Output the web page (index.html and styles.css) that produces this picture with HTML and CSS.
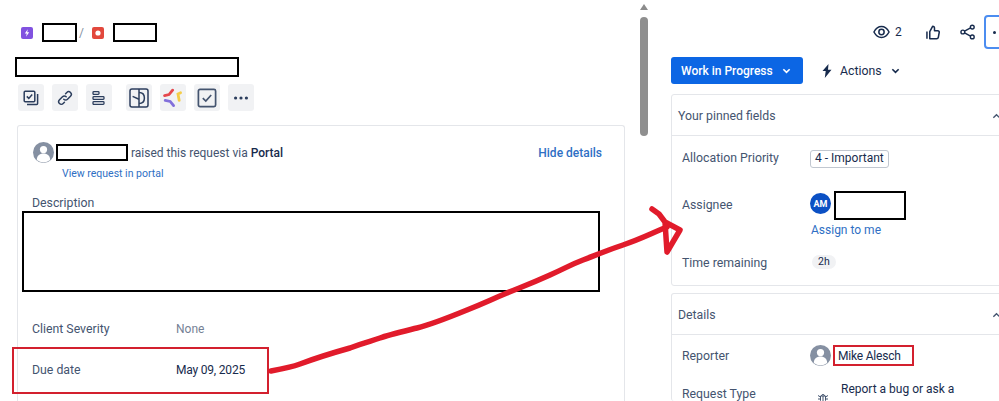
FILE: index.html
```html
<!DOCTYPE html>
<html>
    <head>
        <title>Request details</title>
        <link rel="stylesheet" href="styles.css">
    </head>
    <body>
        <div class="main">
            <div class="breadcrumb">
                <svg class="crumb-icon" viewBox="0 0 12 12"><rect width="12" height="12" rx="2" fill="#8152e0"/><path d="M6.800 2.200 3.800 6.600h2L5 9.800l3.200-4.500H6.200z" fill="#fff"/></svg>
                <span class="redact crumb-a"></span>
                <span class="slash">/</span>
                <svg class="crumb-icon" viewBox="0 0 12 12"><rect width="12" height="12" rx="2" fill="#e2483d"/><circle cx="6" cy="6" r="2.600" fill="#fff"/></svg>
                <span class="redact crumb-b"></span>
            </div>
            <div class="redact title-box"></div>

            <div class="toolbar">
                <button class="tool"><svg viewBox="0 0 16 16" fill="none" stroke="#2c3e5d" stroke-width="1.500"><rect x="1.200" y="1.200" width="10.600" height="10.600" rx="1"/><path d="M3.800 6.400 5.800 8.400 9.200 4.600"/><path d="M14.600 4v9.600a1 1 0 0 1-1 1H4"/></svg></button>
                <button class="tool"><svg viewBox="0 0 16 16" fill="none" stroke="#2c3e5d" stroke-width="1.500" stroke-linecap="round"><path d="M6.800 9.200a2.600 2.600 0 0 0 3.700 0l3-3a2.600 2.600 0 0 0-3.700-3.700L8.600 3.700"/><path d="M9.200 6.800a2.600 2.600 0 0 0-3.700 0l-3 3a2.600 2.600 0 0 0 3.700 3.700l1.200-1.200"/></svg></button>
                <button class="tool tool-last"><svg viewBox="0 0 16 16" fill="none" stroke="#2c3e5d" stroke-width="1.300"><rect x="2" y="1.600" width="6" height="2.800" rx=".8"/><rect x="2" y="6.600" width="11" height="2.800" rx=".8"/><rect x="2" y="11.600" width="11" height="2.800" rx=".8"/></svg></button>
                <button class="tool"><svg class="tool-lg" viewBox="0 0 20 20" fill="none" stroke="#2c3e5d" stroke-width="1.500"><rect x="1" y="1" width="18" height="18" rx="2"/><path d="M10 1v18"/><path d="M10 4.500c3.600 0 5.400 2.400 5.400 5.500s-1.800 5.500-5.400 5.500"/><path d="M3.600 8.400 10 11.200"/></svg></button>
                <button class="tool"><svg class="tool-lg" viewBox="0 0 20 20" fill="none" stroke-width="2.800" stroke-linecap="round"><path d="M9.600 2.200 6 6.600 1.600 7.600" stroke="#e5484d"/><path d="M17.600 4.800 15 6l1.200 6.400" stroke="#f5cd47"/><path d="M2.200 12.400l5 1 3.400 4.200" stroke="#8270db"/></svg></button>
                <button class="tool"><svg class="tool-lg" viewBox="0 0 20 20" fill="none" stroke="#44546f" stroke-width="1.700"><rect x="1.400" y="1.400" width="17.200" height="17.200" rx="1.600"/><path d="M5.800 10.200 8.800 13 14.200 7"/></svg></button>
                <button class="tool"><svg viewBox="0 0 16 16" fill="#2c3e5d"><circle cx="2.600" cy="8" r="1.600"/><circle cx="8" cy="8" r="1.600"/><circle cx="13.400" cy="8" r="1.600"/></svg></button>
            </div>

            <div class="card">
                <div class="request-head">
                    <div class="raised">
                        <svg class="avatar-user" viewBox="0 0 21 21"><circle cx="10.500" cy="10.500" r="10.500" fill="#8590a2"/><circle cx="10.500" cy="7.600" r="3.600" fill="#fff"/><path d="M3.800 18c0-4.400 2.800-6.600 6.700-6.600s6.700 2.200 6.700 6.600a10.500 10.500 0 0 1-13.400 0z" fill="#fff"/></svg>
                        <span class="redact raised-name"></span>
                        <span class="raised-text">raised this request via <b>Portal</b></span>
                    </div>
                    <a class="hide-link">Hide details</a>
                </div>
                <a class="portal-link">View request in portal</a>
                <div class="desc-label">Description</div>
                <div class="redact desc-box"></div>
                <div class="info-row">
                    <div class="info-label">Client Severity</div>
                    <div class="info-none">None</div>
                </div>
                <div class="info-row">
                    <div class="info-label">Due date</div>
                    <div class="info-value">May 09, 2025</div>
                </div>
            </div>
        </div>

        <div class="scrollbar">
            <div class="scroll-arrow"></div>
            <div class="scroll-thumb"></div>
        </div>

        <div class="side">
            <div class="top-actions">
                <svg class="top-eye" viewBox="0 0 18 14" fill="none" stroke="#172b4d" stroke-width="1.600"><path d="M1 7c2-3.800 4.800-5.800 8-5.800s6 2 8 5.800c-2 3.800-4.800 5.800-8 5.800S3 10.800 1 7z"/><circle cx="9" cy="7" r="2.800"/></svg>
                <span class="watch-count">2</span>
                <svg class="top-thumb" viewBox="0 0 15 15" fill="none" stroke="#172b4d" stroke-width="1.600" stroke-linejoin="round"><path d="M1 6.500v7.500"/><path d="M4 6.500 7 1c1.400 0 2 .9 2 2v2.600h3.500c1 0 1.700.9 1.500 1.900l-.9 5c-.2.9-.9 1.500-1.800 1.500H4z"/></svg>
                <svg class="top-share" viewBox="0 0 16 16" fill="none" stroke="#172b4d" stroke-width="1.500"><circle cx="3" cy="8" r="2"/><circle cx="13" cy="2.800" r="2"/><circle cx="13" cy="13.200" r="2"/><path d="M4.800 7.100 11.200 3.700M4.800 8.900l6.400 3.400"/></svg>
                <button class="more-btn"><span></span><span></span><span></span></button>
            </div>

            <div class="status-row">
                <button class="status-btn">Work in Progress
                    <svg class="chev" viewBox="0 0 10 6" fill="none" stroke="#fff" stroke-width="1.800"><path d="M1.500 1 5 4.500 8.500 1"/></svg>
                </button>
                <svg class="bolt" viewBox="0 0 12 14" fill="#172b4d"><path d="M7.500 0 1.500 7h3.200L3.800 14l6.700-8.200H7z"/></svg>
                <span class="actions-text">Actions</span>
                <svg class="chev" viewBox="0 0 10 6" fill="none" stroke="#172b4d" stroke-width="1.800"><path d="M1.500 1 5 4.500 8.500 1"/></svg>
            </div>

            <div class="panel panel-pinned">
                <div class="panel-head">Your pinned fields<svg class="chev-up" viewBox="0 0 10 6" fill="none" stroke="#44546f" stroke-width="1.500"><path d="M1.500 5 5 1.500 8.500 5"/></svg></div>
                <div class="field field-priority">
                    <div class="field-label">Allocation Priority</div>
                    <div><span class="tag">4 - Important</span></div>
                </div>
                <div class="field field-assignee">
                    <div class="field-label">Assignee</div>
                    <div>
                        <div class="assignee-line">
                            <span class="avatar-am">AM</span>
                            <span class="redact assignee-box"></span>
                        </div>
                        <a class="assign-link">Assign to me</a>
                    </div>
                </div>
                <div class="field field-time">
                    <div class="field-label">Time remaining</div>
                    <div><span class="chip">2h</span></div>
                </div>
            </div>

            <div class="panel panel-details">
                <div class="panel-head">Details<svg class="chev-up" viewBox="0 0 10 6" fill="none" stroke="#44546f" stroke-width="1.500"><path d="M1.500 5 5 1.500 8.500 5"/></svg></div>
                <div class="field field-reporter">
                    <div class="field-label">Reporter</div>
                    <div class="reporter-line">
                        <svg class="avatar-user" viewBox="0 0 21 21"><circle cx="10.500" cy="10.500" r="10.500" fill="#8590a2"/><circle cx="10.500" cy="7.600" r="3.600" fill="#fff"/><path d="M3.800 18c0-4.400 2.800-6.600 6.700-6.600s6.700 2.200 6.700 6.600a10.500 10.500 0 0 1-13.400 0z" fill="#fff"/></svg>
                        <span class="reporter-name">Mike Alesch</span>
                    </div>
                </div>
                <div class="field field-type">
                    <div class="field-label type-label">Request Type</div>
                    <div class="type-line">
                        <svg class="bug" viewBox="0 0 12 12" fill="none" stroke="#44546f" stroke-width="1"><path d="M3.500 4h5v4.500a2.500 2.500 0 0 1-5 0z"/><path d="M4.500 4a1.500 1.500 0 0 1 3 0M6 4v7M1 3.500 3.500 5M11 3.500 8.500 5M1 7h2.500M11 7H8.500M1.500 11l2-2M10.500 11l-2-2"/></svg>
                        <span class="type-text">Report a bug or ask a</span>
                    </div>
                </div>
            </div>
        </div>

        <!-- hand drawn markup on top of the screenshot -->
        <div class="mark-due"></div>
        <svg class="mark-arrow" viewBox="0 0 999 401" fill="none" stroke="#e11b2b" stroke-width="5.500" stroke-linecap="round" stroke-linejoin="round">
            <path d="M271 371C282 369 292 367 300 364S325 355 350 348C365 342 372 341 380 338S405 331 417 328 445 319 467 310 490 300 507 293 530 284 550 275 570 265 583 260 605 251 623 245 650 234 667 227"/>
            <path d="M652 209 659 214 665 222 680 230 667 252 665 222"/>
        </svg>
    </body>
</html>
```

FILE: styles.css
```css
body {
    font-family: Roboto, "Noto Sans", sans-serif;
    font-size: 12px;
    color: #44546f;
    background-color: #fff;
    margin: 0;
    padding: 0;
    width: 999px;
    height: 401px;
    display: flex;
    overflow: hidden;
    position: relative;
}

a {
    color: #2f6fc4;
}

b {
    font-weight: 500;
    color: #172b4d;
}

button {
    border: none;
    padding: 0;
    font-family: inherit;
}

/* black redaction boxes */
.redact {
    display: block;
    box-sizing: border-box;
    border: 2px solid #000;
    background-color: #fff;
    flex-shrink: 0;
}

.main {
    width: 637px;
    flex-shrink: 0;
}

.breadcrumb {
    display: flex;
    align-items: center;
    height: 19px;
    margin: 23px 0 0 21px;
}

.crumb-icon {
    width: 12px;
    height: 12px;
}

.crumb-a {
    width: 35px;
    height: 19px;
    margin-left: 9px;
}

.slash {
    width: 15px;
    padding-left: 2px;
    box-sizing: border-box;
    color: #8590a2;
}

.crumb-b {
    width: 44px;
    height: 19px;
    margin-left: 9px;
}

.title-box {
    width: 224px;
    height: 20px;
    margin: 15px 0 0 15px;
}

.toolbar {
    display: flex;
    gap: 8px;
    margin: 7px 0 0 18px;
}

.tool {
    width: 26px;
    height: 27px;
    background-color: #f1f2f4;
    border-radius: 3px;
    display: flex;
    align-items: center;
    justify-content: center;
}

.tool svg {
    width: 16px;
    height: 16px;
}

.tool .tool-lg {
    width: 20px;
    height: 20px;
}

.tool-last {
    margin-right: 6px;
}

.card {
    box-sizing: border-box;
    width: 608px;
    height: 276px;
    margin: 14px 0 0 17px;
    border: 1px solid #e4e6ea;
    border-bottom: none;
    border-radius: 3px 3px 0 0;
}

.request-head {
    display: flex;
    justify-content: space-between;
    align-items: center;
    padding: 16px 22px 0 15px;
}

.raised {
    display: flex;
    align-items: center;
}

.avatar-user {
    width: 21px;
    height: 21px;
    flex-shrink: 0;
}

.raised-name {
    width: 72px;
    height: 17px;
    margin: 0 3px 0 2px;
}

.hide-link {
    font-weight: 500;
}

.portal-link {
    display: block;
    font-size: 10.5px;
    line-height: 14px;
    margin: 4px 0 0 44px;
}

.desc-label {
    font-size: 12.3px;
    line-height: 16px;
    margin: 14px 0 0 14px;
}

.desc-box {
    width: 578px;
    height: 81px;
    margin: 0 0 0 4px;
}

.info-row {
    display: flex;
    align-items: center;
    height: 41px;
    padding-left: 14px;
}

.desc-box + .info-row {
    margin-top: 16px;
}

.info-label {
    width: 144px;
    font-size: 12.3px;
}

.info-none {
    color: #758195;
}

.info-value {
    color: #172b4d;
    letter-spacing: -0.2px;
}

.scrollbar {
    width: 14px;
    flex-shrink: 0;
    display: flex;
    flex-direction: column;
    align-items: center;
    padding-top: 4px;
}

.scroll-arrow {
    width: 0;
    height: 0;
    border-left: 4px solid transparent;
    border-right: 4px solid transparent;
    border-bottom: 6px solid #8c8c8c;
}

.scroll-thumb {
    width: 8px;
    height: 119px;
    margin-top: 7px;
    background-color: #8f8f8f;
    border-radius: 4px;
}

.side {
    width: 346px;
    flex-shrink: 0;
    margin-left: 20px;
}

.top-actions {
    display: flex;
    align-items: center;
    height: 34px;
    margin-top: 15px;
    padding-left: 202px;
}

.top-eye {
    width: 18px;
    height: 14px;
}

.watch-count {
    margin-left: 5px;
    color: #172b4d;
}

.top-thumb {
    width: 15px;
    height: 15px;
    margin-left: 24px;
}

.top-share {
    width: 16px;
    height: 16px;
    margin-left: 20px;
}

.more-btn {
    width: 33px;
    height: 34px;
    margin-left: 9px;
    box-sizing: border-box;
    border: 2px solid #4c8df0;
    border-radius: 4px;
    background-color: #fff;
    display: flex;
    align-items: center;
    gap: 3px;
    padding-left: 7px;
    flex-shrink: 0;
}

.more-btn span {
    width: 3px;
    height: 3px;
    background-color: #172b4d;
    border-radius: 50%;
}

.status-row {
    display: flex;
    align-items: center;
    margin-top: 8px;
    color: #172b4d;
}

.status-btn {
    width: 132px;
    height: 27px;
    background-color: #0c66e4;
    color: #fff;
    border-radius: 3px;
    font-size: 12px;
    font-weight: 500;
    display: flex;
    align-items: center;
    gap: 9px;
    padding-left: 10px;
    box-sizing: border-box;
}

.chev {
    width: 9px;
    height: 6px;
}

.bolt {
    width: 12px;
    height: 14px;
    margin-left: 18px;
}

.actions-text {
    margin: 0 9px 0 7px;
    font-size: 12.3px;
}

.panel {
    border: 1px solid #e4e6ea;
    border-radius: 3px;
    box-sizing: border-box;
}

.panel-pinned {
    height: 192px;
    margin-top: 10px;
}

.panel-details {
    height: 108px;
    margin-top: 7px;
    border-bottom: none;
    overflow: hidden;
}

.panel-head {
    height: 41px;
    box-sizing: border-box;
    padding: 2px 6px 0;
    display: flex;
    align-items: center;
    border-bottom: 1px solid #e4e6ea;
    font-size: 12.3px;
}

.chev-up {
    width: 9px;
    height: 6px;
    margin-left: auto;
    margin-right: 9px;
    flex-shrink: 0;
}

.field {
    display: flex;
    padding-left: 10px;
}

.field-label {
    width: 128px;
    flex-shrink: 0;
    font-size: 12.3px;
}

.field-priority {
    padding-top: 14px;
}

.field-priority .field-label {
    padding-top: 1px;
}

.tag {
    display: inline-block;
    box-sizing: border-box;
    height: 18px;
    line-height: 15px;
    padding: 0 4px;
    border: 1px solid #c1c7d0;
    border-radius: 3px;
    color: #172b4d;
}

.field-assignee {
    padding-top: 23px;
}

.field-assignee .field-label {
    padding-top: 7px;
}

.assignee-line {
    display: flex;
    align-items: flex-start;
    height: 29px;
}

.avatar-am {
    width: 21px;
    height: 21px;
    margin-top: 2px;
    border-radius: 50%;
    background-color: #0b50c4;
    color: #fff;
    font-size: 9px;
    font-weight: 700;
    display: flex;
    align-items: center;
    justify-content: center;
}

.assignee-box {
    width: 72px;
    height: 29px;
    margin-left: 3px;
}

.assign-link {
    display: block;
    line-height: 16px;
    margin: 2px 0 0 1px;
}

.field-time {
    padding-top: 18px;
    height: 24px;
}

.chip {
    display: block;
    margin: -1px 0 0 2px;
    padding: 0 6px;
    line-height: 14px;
    height: 14px;
    font-size: 10.5px;
    background-color: #f1f2f4;
    border-radius: 7px;
    color: #172b4d;
}

.field-reporter {
    padding-top: 10px;
    align-items: center;
}

.reporter-line {
    display: flex;
    align-items: center;
}

.reporter-name {
    box-sizing: border-box;
    width: 81px;
    height: 21px;
    line-height: 18px;
    margin-left: 2px;
    padding-left: 3px;
    border: 2px solid #d3202e;
    color: #172b4d;
    letter-spacing: -0.2px;
}

.field-type {
    padding-top: 14px;
}

.type-label {
    padding-top: 7px;
}

.type-line {
    display: flex;
    align-items: flex-start;
    color: #172b4d;
}

.type-text {
    padding-top: 2px;
}

.bug {
    width: 12px;
    height: 12px;
    margin: 12px 12px 0 7px;
}

/* annotations */
.mark-due {
    position: absolute;
    left: 12px;
    top: 347px;
    width: 253px;
    height: 43px;
    border: 2px solid #d3202e;
}

.mark-arrow {
    position: absolute;
    left: 0;
    top: 0;
    width: 999px;
    height: 401px;
    pointer-events: none;
}
```
